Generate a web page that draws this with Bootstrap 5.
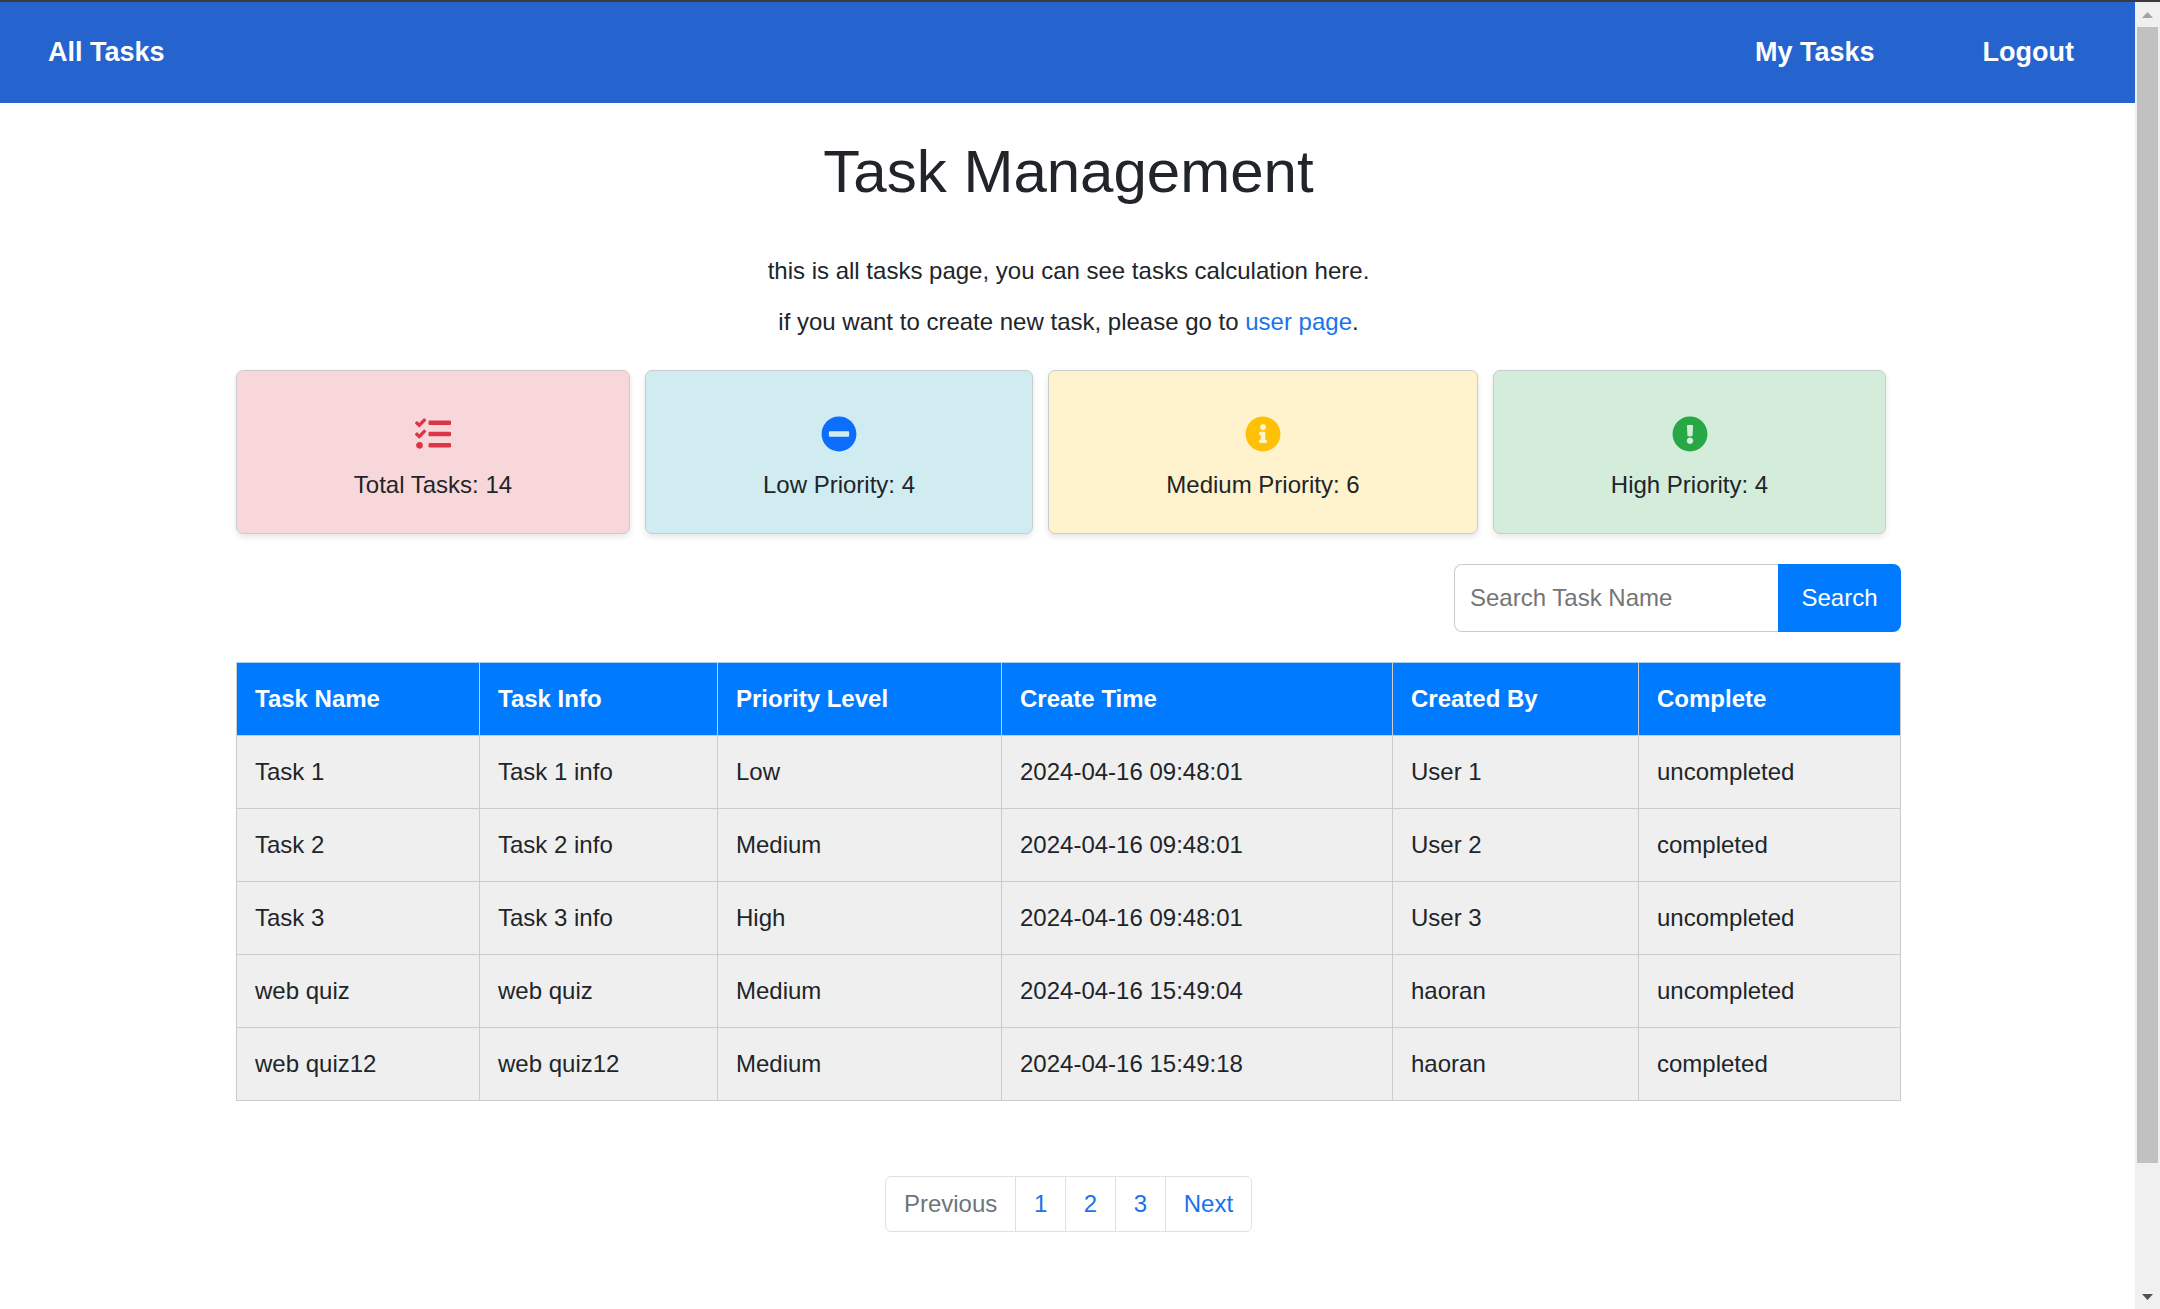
<!DOCTYPE html>
<html lang="en">
<head>
<meta charset="utf-8">
<meta name="viewport" content="width=device-width, initial-scale=1">
<title>Task Management</title>
<link href="https://cdn.jsdelivr.net/npm/bootstrap@5.3.0/dist/css/bootstrap.min.css" rel="stylesheet">
<style>
  html { font-size: 24px; overflow: hidden; }
  body { font-family: "Liberation Sans", Arial, sans-serif; color: #212529; height: 100vh; overflow: hidden; border-top: 2px solid #3b3b3b; }
  a { color: #1a73e8; text-decoration: none; }
  .topbar { background: #2564cf; height: 101px; padding: 0 61px 0 48px; }
  .topbar a { color: #fff; font-weight: 700; font-size: 27px; line-height: 40px; margin-top: 30px; }
  .topbar-links { gap: 108px; }
  .page-wrap { width: 1665px; margin: 0 auto; position: relative; left: 1px; }
  .page-title { font-size: 60px; line-height: 72px; font-weight: 400; margin: 33px 0 0; }
  .intro { margin-top: 45px; }
  .intro p { line-height: 36px; margin: 0 0 15px; }
  .stat-row { margin-top: 30px; padding-right: 15px; gap: 15px; }
  .stat-box { height: 164px; border: 1px solid #c9cccc; border-radius: 7px; box-shadow: 0 3px 6px rgba(0,0,0,.1); padding-top: 45px; line-height: 36px; }
  .stat-box svg { width: 36px; height: 36px; display: block; margin: 0 auto 15px; }
  .stat-total { width: 394px; background: #f8d7da; color: #dc3545; }
  .stat-low { width: 388px; background: #d1ecf1; color: #0d6efd; }
  .stat-medium { width: 430px; background: #fff3cd; color: #ffc107; }
  .stat-high { width: 393px; background: #d4edda; color: #28a745; }
  .stat-box span { color: #212529; }
  .search-row { margin-top: 30px; height: 68px; }
  .search-row input { width: 324px; border: 1px solid #ccc; border-right: 0; border-radius: 8px 0 0 8px; padding: 0 15px; font-size: 24px; outline: 0; }
  .search-row input::placeholder { color: #757575; opacity: 1; }
  .search-row button { width: 123px; border: 0; background: #007bff; color: #fff; border-radius: 0 8px 8px 0; padding: 0; }
  .task-grid { margin-top: 30px; width: 1665px; table-layout: fixed; border-collapse: collapse; }
  .task-grid th, .task-grid td { height: 73px; padding: 0 18px; border: 1px solid #ccc; background: #efefef; }
  .task-grid th { background: #007bff; color: #fff; border-top-color: #a9d2fb; border-bottom-color: #a9d2fb; }
  .pager { margin-top: 75px; --bs-pagination-color: #1a73e8; --bs-pagination-border-color: #dee2e6; --bs-pagination-disabled-bg: #fff; --bs-pagination-disabled-color: #6c757d; --bs-pagination-border-radius: 6px; }
  .pager .page-link { line-height: 30px; font-size: 24px; padding: 12px 17.8px; }
  .scroll-track { width: 25px; background: #f0f0f0; padding: 0 2px; }
  .scroll-track svg { display: block; width: 21px; }
  .scroll-thumb { background: #c1c1c1; height: 1136px; }
</style>
<script src="https://cdn.jsdelivr.net/npm/bootstrap@5.3.0/dist/js/bootstrap.bundle.min.js"></script>
</head>
<body class="d-flex">
<div class="flex-grow-1">
  <nav class="topbar d-flex justify-content-between align-items-start">
    <a href="#">All Tasks</a>
    <div class="topbar-links d-flex"><a href="#">My Tasks</a><a href="#">Logout</a></div>
  </nav>
  <main class="page-wrap">
    <h1 class="page-title text-center">Task Management</h1>
    <div class="intro text-center">
      <p>this is all tasks page, you can see tasks calculation here.</p>
      <p>if you want to create new task, please go to <a href="#">user page</a>.</p>
    </div>
    <div class="stat-row d-flex text-center">
      <div class="stat-box stat-total">
        <svg viewBox="0 0 512 512" fill="currentColor"><path d="M139.61 35.5a12 12 0 0 0-17 0L58.93 98.81l-22.7-22.12a12 12 0 0 0-17 0L3.53 92.41a12 12 0 0 0 0 17l47.59 47.4a12.78 12.78 0 0 0 17.61 0l15.59-15.62L156.52 69a12.09 12.09 0 0 0 .09-17zm0 159.19a12 12 0 0 0-17 0l-63.68 63.72-22.7-22.1a12 12 0 0 0-17 0L3.53 252a12 12 0 0 0 0 17L51 316.5a12.77 12.77 0 0 0 17.6 0l15.7-15.69 72.2-72.22a12 12 0 0 0 .09-16.9zM64 368c-26.49 0-48.59 21.5-48.59 48S37.53 464 64 464a48 48 0 0 0 0-96zm432 16H208a16 16 0 0 0-16 16v32a16 16 0 0 0 16 16h288a16 16 0 0 0 16-16v-32a16 16 0 0 0-16-16zm0-320H208a16 16 0 0 0-16 16v32a16 16 0 0 0 16 16h288a16 16 0 0 0 16-16V80a16 16 0 0 0-16-16zm0 160H208a16 16 0 0 0-16 16v32a16 16 0 0 0 16 16h288a16 16 0 0 0 16-16v-32a16 16 0 0 0-16-16z"/></svg>
        <span>Total Tasks: 14</span>
      </div>
      <div class="stat-box stat-low">
        <svg viewBox="0 0 512 512" fill="currentColor"><path d="M256 8C119 8 8 119 8 256s111 248 248 248 248-111 248-248S393 8 256 8zM124 296c-6.600 0-12-5.400-12-12v-56c0-6.600 5.400-12 12-12h264c6.600 0 12 5.400 12 12v56c0 6.600-5.400 12-12 12H124z"/></svg>
        <span>Low Priority: 4</span>
      </div>
      <div class="stat-box stat-medium">
        <svg viewBox="0 0 512 512" fill="currentColor"><path d="M256 8C119.043 8 8 119.083 8 256c0 136.997 111.043 248 248 248s248-111.003 248-248C504 119.083 392.957 8 256 8zm0 110c23.196 0 42 18.804 42 42s-18.804 42-42 42-42-18.804-42-42 18.804-42 42-42zm56 254c0 6.627-5.373 12-12 12h-88c-6.627 0-12-5.373-12-12v-24c0-6.627 5.373-12 12-12h12v-64h-12c-6.627 0-12-5.373-12-12v-24c0-6.627 5.373-12 12-12h64c6.627 0 12 5.373 12 12v100h12c6.627 0 12 5.373 12 12v24z"/></svg>
        <span>Medium Priority: 6</span>
      </div>
      <div class="stat-box stat-high">
        <svg viewBox="0 0 512 512" fill="currentColor"><path d="M504 256c0 136.997-111.043 248-248 248S8 392.997 8 256C8 119.083 119.043 8 256 8s248 111.083 248 248zm-248 50c-25.405 0-46 20.595-46 46s20.595 46 46 46 46-20.595 46-46-20.595-46-46-46zm-43.673-165.346l7.418 136c.347 6.364 5.609 11.346 11.982 11.346h48.546c6.373 0 11.635-4.982 11.982-11.346l7.418-136c.375-6.874-5.098-12.654-11.982-12.654h-63.383c-6.884 0-12.356 5.780-11.981 12.654z"/></svg>
        <span>High Priority: 4</span>
      </div>
    </div>
    <form class="search-row d-flex justify-content-end">
      <input type="text" placeholder="Search Task Name"><button type="button">Search</button>
    </form>
    <table class="task-grid">
      <colgroup><col style="width:243px"><col style="width:238px"><col style="width:284px"><col style="width:391px"><col style="width:246px"><col style="width:262px"></colgroup>
      <thead><tr><th>Task Name</th><th>Task Info</th><th>Priority Level</th><th>Create Time</th><th>Created By</th><th>Complete</th></tr></thead>
      <tbody>
        <tr><td>Task 1</td><td>Task 1 info</td><td>Low</td><td>2024-04-16 09:48:01</td><td>User 1</td><td>uncompleted</td></tr>
        <tr><td>Task 2</td><td>Task 2 info</td><td>Medium</td><td>2024-04-16 09:48:01</td><td>User 2</td><td>completed</td></tr>
        <tr><td>Task 3</td><td>Task 3 info</td><td>High</td><td>2024-04-16 09:48:01</td><td>User 3</td><td>uncompleted</td></tr>
        <tr><td>web quiz</td><td>web quiz</td><td>Medium</td><td>2024-04-16 15:49:04</td><td>haoran</td><td>uncompleted</td></tr>
        <tr><td>web quiz12</td><td>web quiz12</td><td>Medium</td><td>2024-04-16 15:49:18</td><td>haoran</td><td>completed</td></tr>
      </tbody>
    </table>
    <ul class="pagination pager justify-content-center mb-0">
      <li class="page-item disabled"><a class="page-link" href="#">Previous</a></li>
      <li class="page-item"><a class="page-link" href="#">1</a></li>
      <li class="page-item"><a class="page-link" href="#">2</a></li>
      <li class="page-item"><a class="page-link" href="#">3</a></li>
      <li class="page-item"><a class="page-link" href="#">Next</a></li>
    </ul>
  </main>
</div>
<aside class="scroll-track d-flex flex-column flex-shrink-0">
  <svg height="25" viewBox="0 0 21 25" fill="#a3a3a3"><path d="M5 16h11l-5.500-6z"/></svg>
  <div class="scroll-thumb"></div>
  <svg class="mt-auto" height="25" viewBox="0 0 21 25" fill="#505050"><path d="M5 10h11l-5.500 6z"/></svg>
</aside>
</body>
</html>
